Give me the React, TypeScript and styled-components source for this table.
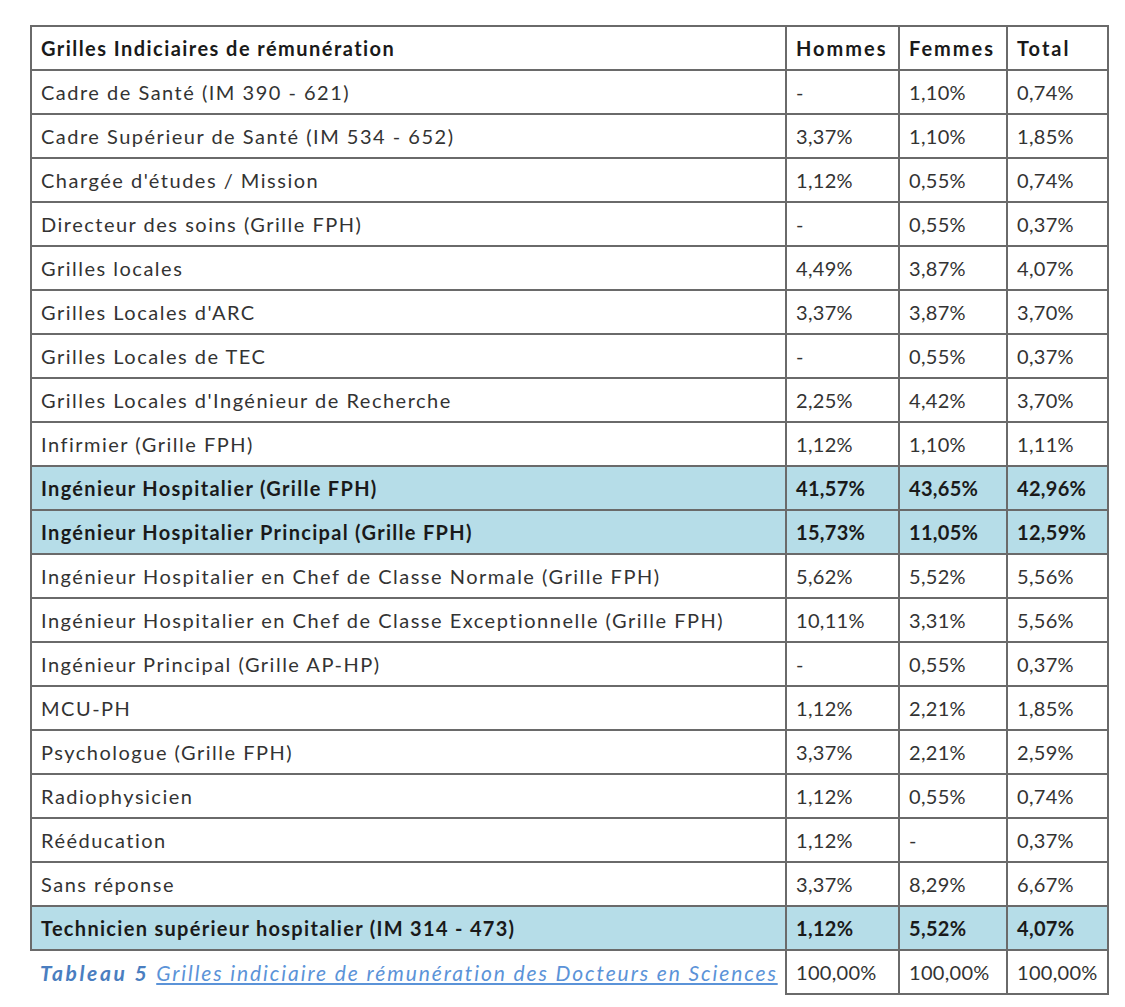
import React from "react";
import styled, { createGlobalStyle } from "styled-components";

const GlobalStyle = createGlobalStyle`
  html, body { margin: 0; padding: 0; background: #ffffff; }
  body { font-family: "Lato", "DejaVu Sans", sans-serif; color: #222222; }
`;

const Page = styled.div`
  padding: 25px 0 0 30px;
`;

const Table = styled.table`
  border-collapse: collapse;
  table-layout: fixed;
  width: 1077px;
  font-size: 20px;
`;

const Col = styled.col<{ $w: number }>`
  width: ${(p) => p.$w}px;
`;

const Row = styled.tr<{ $hl?: boolean }>`
  height: 44px;
  background: ${(p) => (p.$hl ? "#b6dde8" : "transparent")};
  font-weight: ${(p) => (p.$hl ? 700 : 400)};
`;

const HeadCell = styled.th<{ $label?: boolean }>`
  border: 2px solid #6a6a6a;
  padding: 0 9px;
  text-align: left;
  font-weight: 700;
  color: #1a1a1a;
  white-space: nowrap;
  letter-spacing: ${(p) => (p.$label ? "1.45px" : "2px")};
`;

const Cell = styled.td<{ $label?: boolean; $hl?: boolean }>`
  border: 2px solid #6a6a6a;
  padding: 0 9px;
  text-align: left;
  white-space: nowrap;
  color: ${(p) => (p.$hl ? "#1a1a1a" : "#333333")};
  letter-spacing: ${(p) => (p.$label ? (p.$hl ? "1.3px" : "1.5px") : "0.3px")};
`;

const CaptionCell = styled.td`
  padding: 0 9px;
  white-space: nowrap;
  font-style: italic;
  font-size: 21px;
  letter-spacing: 1.9px;
`;

const CaptionLabel = styled.span`
  color: #4a7ec0;
  font-weight: 700;
  letter-spacing: 2.6px;
`;

const CaptionText = styled.span`
  color: #5b93d8;
  text-decoration: underline;
`;

type R = [string, string, string, string, boolean?];

const rows: R[] = [
  ["Cadre de Santé (IM 390 - 621)", "-", "1,10%", "0,74%"],
  ["Cadre Supérieur de Santé (IM 534 - 652)", "3,37%", "1,10%", "1,85%"],
  ["Chargée d'études / Mission", "1,12%", "0,55%", "0,74%"],
  ["Directeur des soins (Grille FPH)", "-", "0,55%", "0,37%"],
  ["Grilles locales", "4,49%", "3,87%", "4,07%"],
  ["Grilles Locales d'ARC", "3,37%", "3,87%", "3,70%"],
  ["Grilles Locales de TEC", "-", "0,55%", "0,37%"],
  ["Grilles Locales d'Ingénieur de Recherche", "2,25%", "4,42%", "3,70%"],
  ["Infirmier (Grille FPH)", "1,12%", "1,10%", "1,11%"],
  ["Ingénieur Hospitalier (Grille FPH)", "41,57%", "43,65%", "42,96%", true],
  ["Ingénieur Hospitalier Principal (Grille FPH)", "15,73%", "11,05%", "12,59%", true],
  ["Ingénieur Hospitalier en Chef de Classe Normale (Grille FPH)", "5,62%", "5,52%", "5,56%"],
  ["Ingénieur Hospitalier en Chef de Classe Exceptionnelle (Grille FPH)", "10,11%", "3,31%", "5,56%"],
  ["Ingénieur Principal (Grille AP-HP)", "-", "0,55%", "0,37%"],
  ["MCU-PH", "1,12%", "2,21%", "1,85%"],
  ["Psychologue (Grille FPH)", "3,37%", "2,21%", "2,59%"],
  ["Radiophysicien", "1,12%", "0,55%", "0,74%"],
  ["Rééducation", "1,12%", "-", "0,37%"],
  ["Sans réponse", "3,37%", "8,29%", "6,67%"],
  ["Technicien supérieur hospitalier (IM 314 - 473)", "1,12%", "5,52%", "4,07%", true],
];

export default function App() {
  return (
    <>
      <GlobalStyle />
      <Page>
        <Table>
          <colgroup>
            <Col $w={755} />
            <Col $w={113} />
            <Col $w={108} />
            <Col $w={101} />
          </colgroup>
          <thead>
            <Row>
              <HeadCell $label>Grilles Indiciaires de rémunération</HeadCell>
              <HeadCell>Hommes</HeadCell>
              <HeadCell>Femmes</HeadCell>
              <HeadCell>Total</HeadCell>
            </Row>
          </thead>
          <tbody>
            {rows.map((r) => (
              <Row key={r[0]} $hl={r[4]}>
                <Cell $label $hl={r[4]}>{r[0]}</Cell>
                <Cell $hl={r[4]}>{r[1]}</Cell>
                <Cell $hl={r[4]}>{r[2]}</Cell>
                <Cell $hl={r[4]}>{r[3]}</Cell>
              </Row>
            ))}
            <Row>
              <CaptionCell>
                <CaptionLabel>Tableau 5</CaptionLabel>{" "}
                <CaptionText>Grilles indiciaire de rémunération des Docteurs en Sciences</CaptionText>
              </CaptionCell>
              <Cell>100,00%</Cell>
              <Cell>100,00%</Cell>
              <Cell>100,00%</Cell>
            </Row>
          </tbody>
        </Table>
      </Page>
    </>
  );
}
